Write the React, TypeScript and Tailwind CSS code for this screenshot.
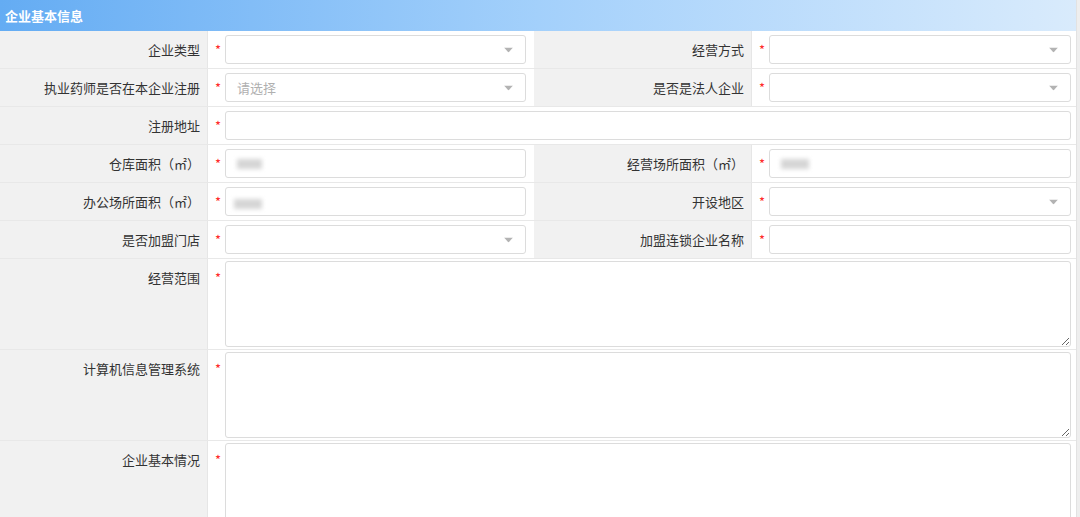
import React from "react";

const font = { fontFamily: '"Noto Sans CJK SC", "Noto Sans", sans-serif' };

function Star() {
  return <span className="block w-[17px] shrink-0 text-center text-[13px] leading-none text-[#ff2a2a] pl-[6px] pr-[3px]">*</span>;
}

function Label({ text, w, top }: { text: string; w: string; top?: boolean }) {
  return (
    <div
      className={`${w} shrink-0 bg-[#f1f1f1] border-r border-[#e6e6e6] flex justify-end pr-[7px] text-[13px] text-[#333] ${top ? "items-start pt-[9px]" : "items-center"}`}
    >
      {text}
    </div>
  );
}

function Arrow() {
  return (
    <svg width="9" height="5" viewBox="0 0 9 5" className="absolute right-[12px] top-1/2 -translate-y-1/2">
      <path d="M0 0 L9 0 L4.5 5 Z" fill="#b3b3b3" />
    </svg>
  );
}

function Field({
  w,
  select,
  placeholder,
  blob,
  pr,
}: {
  w: string;
  select?: boolean;
  placeholder?: string;
  blob?: string;
  pr: string;
}) {
  return (
    <div className={`${w} flex items-center ${pr}`}>
      <Star />
      <div className="relative flex-1 h-[29px] border border-[#dcdcdc] rounded-[3px] bg-white flex items-center pl-[11px]">
        {placeholder && <span className="text-[13px] text-[#b0b0b0]">{placeholder}</span>}
        {blob && <div className={`${blob} h-[10px] bg-[#d6d6d6] blur-[2px]`} />}
        {select && <Arrow />}
      </div>
    </div>
  );
}

function Row({ children, h }: { children: React.ReactNode; h: string }) {
  return <div className={`flex shrink-0 ${h} border-b border-[#e8e8e8]`}>{children}</div>;
}

function AreaRow({ label, h, last }: { label: string; h: string; last?: boolean }) {
  return (
    <div className={`flex shrink-0 ${h} ${last ? "" : "border-b border-[#e8e8e8]"}`}>
      <Label text={label} w="w-[208px]" top />
      <div className={`flex-1 flex items-start pr-[5px] ${last ? "pt-[2px]" : "py-[2px]"}`}>
        <div className="pt-[10px] shrink-0">
          <Star />
        </div>
        <textarea
          className={`flex-1 ${last ? "h-[120px]" : "h-full"} border border-[#dcdcdc] rounded-[3px] bg-white outline-none`}
        />
      </div>
    </div>
  );
}

export default function App() {
  return (
    <div className="w-[1080px] h-[517px] overflow-hidden bg-white flex" style={font}>
      <div className="flex-1 flex flex-col">
        <div className="h-[31px] shrink-0 flex items-center pl-[5px] bg-gradient-to-r from-[#64acf3] via-[#a3d0fb] to-[#d9ebfc]">
          <span className="text-white font-bold text-[13px]">企业基本信息</span>
        </div>
        <Row h="h-[38px]">
          <Label text="企业类型" w="w-[208px]" />
          <Field w="w-[326px]" select pr="pr-[8px]" />
          <Label text="经营方式" w="w-[218px]" />
          <Field w="flex-1" select pr="pr-[5px]" />
        </Row>
        <Row h="h-[38px]">
          <Label text="执业药师是否在本企业注册" w="w-[208px]" />
          <Field w="w-[326px]" select placeholder="请选择" pr="pr-[8px]" />
          <Label text="是否是法人企业" w="w-[218px]" />
          <Field w="flex-1" select pr="pr-[5px]" />
        </Row>
        <Row h="h-[38px]">
          <Label text="注册地址" w="w-[208px]" />
          <Field w="flex-1" pr="pr-[5px]" />
        </Row>
        <Row h="h-[38px]">
          <Label text="仓库面积（㎡）" w="w-[208px]" />
          <Field w="w-[326px]" blob="w-[25px]" pr="pr-[8px]" />
          <Label text="经营场所面积（㎡）" w="w-[218px]" />
          <Field w="flex-1" blob="w-[28px]" pr="pr-[5px]" />
        </Row>
        <Row h="h-[38px]">
          <Label text="办公场所面积（㎡）" w="w-[208px]" />
          <Field w="w-[326px]" blob="w-[28px] -ml-[3px] mt-[5px]" pr="pr-[8px]" />
          <Label text="开设地区" w="w-[218px]" />
          <Field w="flex-1" select pr="pr-[5px]" />
        </Row>
        <Row h="h-[38px]">
          <Label text="是否加盟门店" w="w-[208px]" />
          <Field w="w-[326px]" select pr="pr-[8px]" />
          <Label text="加盟连锁企业名称" w="w-[218px]" />
          <Field w="flex-1" pr="pr-[5px]" />
        </Row>
        <AreaRow label="经营范围" h="h-[91px]" />
        <AreaRow label="计算机信息管理系统" h="h-[91px]" />
        <AreaRow label="企业基本情况" h="h-[90px]" last />
      </div>
      <div className="w-[4px] shrink-0 bg-[#eeeeee] border-l border-[#e2e2e2]" />
    </div>
  );
}
